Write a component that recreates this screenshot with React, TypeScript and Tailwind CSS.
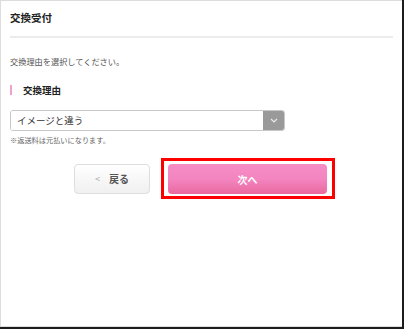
export default function App() {
  return (
    <div className="w-[404px] h-[329px] bg-white border-r-2 border-b-2 border-[#1c1c1c] font-['Noto_Sans_CJK_JP','Noto_Sans',sans-serif]">
      <div className="h-full border-l border-t border-b border-[#dcdcdc] pl-[9px] pr-[9px]">
        {/* Header */}
        <h1 className="pt-[10px] text-[10.5px] leading-[14px] font-bold text-[#222] tracking-[0px]">交換受付</h1>
        <div className="mt-[11px] h-[2px] bg-[#ececec]" />

        <p className="mt-[18px] text-[8.2px] leading-[10px] text-[#555]">交換理由を選択してください。</p>

        {/* Section title */}
        <div className="mt-[18px] flex items-center">
          <span className="w-[2px] h-[10px] bg-[#f4a0c9]" />
          <span className="ml-[11px] text-[9.5px] leading-[12px] font-bold text-[#222]">交換理由</span>
        </div>

        {/* Select */}
        <div className="mt-[14px] flex w-[275px] h-[21px] border border-[#c8c8c8] rounded-[3px] overflow-hidden">
          <div className="flex-1 flex items-center pl-[6px] text-[9.5px] text-[#333] bg-white">イメージと違う</div>
          <div className="w-[21px] bg-[#9a9a9a] flex items-center justify-center">
            <svg width="8" height="5" viewBox="0 0 8 5" fill="none">
              <path d="M1 1l3 3 3-3" stroke="#eaeaea" strokeWidth="1.2" />
            </svg>
          </div>
        </div>
        <p className="mt-[5px] text-[7.2px] leading-[9px] text-[#666]">※返送料は元払いになります。</p>

        {/* Buttons */}
        <div className="mt-[13px] flex items-center ml-[64px]">
          <button className="w-[76px] h-[30px] rounded-[4px] border border-[#dedede] bg-gradient-to-b from-white to-[#f0f0f0] flex items-center justify-center gap-[9px] text-[#555]">
            <span className="text-[9px] text-[#aaa]">&lt;</span>
            <span className="text-[10px] font-bold">戻る</span>
          </button>
          <div className="ml-[11px] border-[3px] border-[#ff0000] pt-[3px] pb-[2px] pl-[4px] pr-[5px]">
            <button className="w-[159px] h-[30px] rounded-[4px] bg-gradient-to-b from-[#f68dc6] via-[#f385c0] to-[#e9699f] text-white text-[10px] font-bold flex items-center justify-center">
              次へ
            </button>
          </div>
        </div>
      </div>
    </div>
  )
}
